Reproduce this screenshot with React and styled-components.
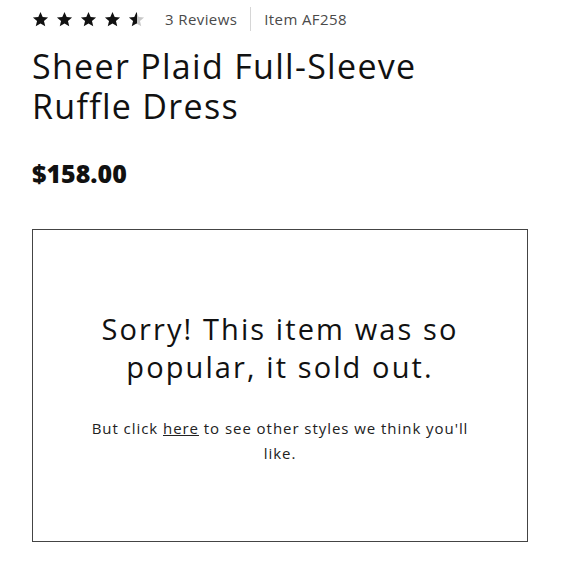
import React from "react";
import styled, { createGlobalStyle } from "styled-components";

const GlobalStyle = createGlobalStyle`
  body {
    margin: 0;
    background: #fff;
    font-family: "Open Sans", Lato, sans-serif;
    color: #111;
  }
`;

const Page = styled.div`
  width: 580px;
  padding: 7px 0 0 32px;
  box-sizing: border-box;
`;

const MetaRow = styled.div`
  display: flex;
  align-items: center;
  height: 24px;
`;

const Stars = styled.div`
  display: flex;
  gap: 7px;
  margin-right: 20px;
`;

const MetaText = styled.span`
  font-size: 15px;
  letter-spacing: 0.4px;
  color: #4a4a4a;
  padding: 0 13px 0 13px;
  &:first-of-type {
    padding-left: 0;
  }
`;

const Divider = styled.span`
  width: 1px;
  height: 24px;
  background: #d6d6d6;
`;

const Title = styled.h1`
  margin: 15px 0 0;
  font-size: 34px;
  font-weight: 400;
  line-height: 40px;
  letter-spacing: 1.3px;
  color: #111;
`;

const Price = styled.div`
  margin-top: 32px;
  font-size: 25px;
  font-weight: 800;
  line-height: 30px;
`;

const SoldOutBox = styled.section`
  margin-top: 41px;
  width: 496px;
  height: 313px;
  box-sizing: border-box;
  border: 1.5px solid #444;
  display: flex;
  flex-direction: column;
  align-items: center;
  justify-content: center;
  text-align: center;
  padding: 10px 0 6px;
`;

const Heading = styled.h2`
  margin: 0;
  max-width: 390px;
  font-size: 29px;
  font-weight: 400;
  line-height: 38px;
  letter-spacing: 2.1px;
`;

const Note = styled.p`
  margin: 30px 0 0;
  max-width: 400px;
  font-size: 15px;
  line-height: 25px;
  letter-spacing: 0.95px;
  color: #222;
`;

const Link = styled.a`
  color: inherit;
  text-decoration: underline;
`;

const Star = ({ fill }) => {
  const id = `half-${fill}`;
  return (
    <svg width="17" height="17" viewBox="0 0 24 24">
      <defs>
        <linearGradient id={id}>
          <stop offset={fill} stopColor="#111" />
          <stop offset={fill} stopColor="#c8c8c8" />
        </linearGradient>
      </defs>
      <path
        d="M12 1.5l3.1 7.1 7.6.6-5.8 5 1.8 7.5L12 17.7l-6.7 4 1.8-7.5-5.8-5 7.6-.6z"
        fill={`url(#${id})`}
      />
    </svg>
  );
};

export default function App() {
  return (
    <>
      <GlobalStyle />
      <Page>
        <MetaRow>
          <Stars>
            {[1, 1, 1, 1, 0.5].map((f, i) => (
              <Star key={i} fill={f} />
            ))}
          </Stars>
          <MetaText>3 Reviews</MetaText>
          <Divider />
          <MetaText>Item AF258</MetaText>
        </MetaRow>
        <Title>
          Sheer Plaid Full-Sleeve
          <br />
          Ruffle Dress
        </Title>
        <Price>$158.00</Price>
        <SoldOutBox>
          <Heading>Sorry! This item was so popular, it sold out.</Heading>
          <Note>
            But click <Link href="#">here</Link> to see other styles we think
            you'll like.
          </Note>
        </SoldOutBox>
      </Page>
    </>
  );
}
